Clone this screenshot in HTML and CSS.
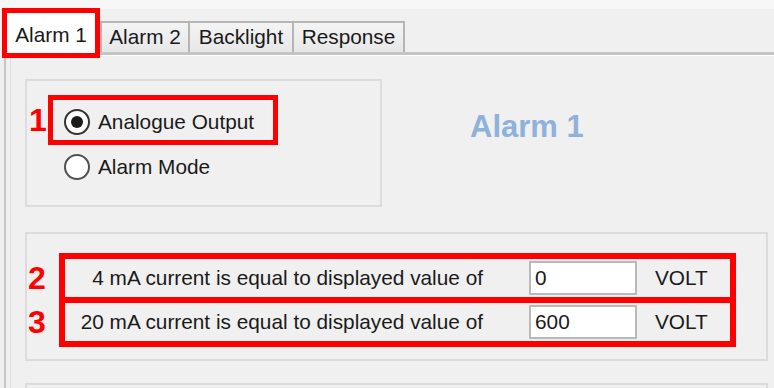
FILE: index.html
```html
<!DOCTYPE html>
<html lang="en">
<head>
  <meta charset="UTF-8" />
  <title>Alarm 1 settings</title>
  <link rel="stylesheet" href="styles.css">
</head>
<body>

  <div class="window">
    <div class="tabbar">
      <div class="tab tab-active">Alarm 1</div>
      <div class="tab tab-alarm2">Alarm 2</div>
      <div class="tab tab-backlight">Backlight</div>
      <div class="tab tab-response">Response</div>
    </div>

    <div class="tabpage">
      <div class="top-row">
        <div class="groupbox mode-box">
          <div class="radio-line">
            <span class="num num-1">1</span>
            <label class="radio-row mark-radio"><span class="radio checked"></span>Analogue Output</label>
          </div>
          <label class="radio-row radio-plain"><span class="radio"></span>Alarm Mode</label>
        </div>
        <div class="page-title">Alarm 1</div>
      </div>

      <div class="groupbox scale-box">
        <div class="scale-line">
          <span class="num">2</span>
          <div class="scale-row">
            <span class="scale-label">4 mA current is equal to displayed value of</span>
            <input class="value" type="text" value="0">
            <span class="unit">VOLT</span>
          </div>
        </div>
        <div class="scale-line scale-line-next">
          <span class="num">3</span>
          <div class="scale-row">
            <span class="scale-label">20 mA current is equal to displayed value of</span>
            <input class="value" type="text" value="600">
            <span class="unit">VOLT</span>
          </div>
        </div>
      </div>

      <div class="groupbox rest-box"></div>
    </div>
  </div>

</body>
</html>
```

FILE: styles.css
```css
body {
  margin: 0;
  background: #f0f0f0;
  font-family: "Liberation Sans", Arial, sans-serif;
  font-size: 20.8px;
  color: #1a1a1a;
  overflow: hidden;
}

.window {
  width: 774px;
  height: 388px;
  overflow: hidden;
}

/* tab strip */
.tabbar {
  display: flex;
  align-items: flex-end;
  height: 52px;
  padding-left: 2px;
  background: linear-gradient(#f7f7f7 0 9px, #f0f0f0 9px);
}

.tab {
  box-sizing: border-box;
  height: 31px;
  padding-top: 4px;
  border: 2px solid #b5b5b5;
  border-right: none;
  border-bottom: none;
  background: linear-gradient(#f4f4f4, #e7e7e7);
  font-size: 20.8px;
  line-height: 20px;
  text-align: center;
}

.tab-active {
  position: relative;
  z-index: 1;
  width: 98px;
  height: 50px;
  margin-bottom: -6px;
  padding-top: 12px;
  border: 5px solid #ff0000;
  background: #fff;
}

.tab-alarm2 { width: 88px; }
.tab-backlight { width: 104px; }
.tab-response {
  width: 113px;
  border-right: 2px solid #b5b5b5;
}

/* tab page */
.tabpage {
  margin-left: 4px;
  padding: 24px 0 0 19px;
  border-left: 2px solid #c6c6c6;
  border-top: 3px solid #c4c4c4;
  box-shadow: inset 0 1px 0 #fff, inset 4px 0 0 #f0f0f0, inset 5px 0 0 #e0e0e0;
  height: 400px;
}

.groupbox {
  box-sizing: border-box;
  border: 2px solid #dcdcdc;
}

.top-row {
  display: flex;
  align-items: flex-start;
}

.num {
  color: #ff0000;
  font-weight: bold;
  font-size: 32px;
  line-height: 1;
  flex: none;
}

/* output mode */
.mode-box {
  width: 357px;
  height: 128px;
  padding-top: 14px;
}

.radio-line {
  display: flex;
  align-items: center;
}

.num-1 {
  width: 21px;
  padding-left: 2px;
  box-sizing: border-box;
}

.radio-row {
  display: flex;
  align-items: center;
}

.mark-radio {
  box-sizing: border-box;
  width: 230px;
  height: 50px;
  padding: 4px 0 0 11px;
  border: 5px solid #ff0000;
}

.radio-plain {
  height: 26px;
  margin: 9px 0 0 37px;
}

.radio {
  box-sizing: border-box;
  width: 26px;
  height: 26px;
  margin-right: 8px;
  border: 2px solid #505050;
  border-radius: 50%;
  background: #fff;
  display: flex;
  align-items: center;
  justify-content: center;
  flex: none;
}

.radio.checked {
  border-color: #333;
}

.radio.checked::after {
  content: "";
  width: 12px;
  height: 12px;
  border-radius: 50%;
  background: #1a1a1a;
}

.page-title {
  margin: 32px 0 0 88px;
  font-weight: bold;
  font-size: 31px;
  line-height: 1;
  color: #8eb2d9;
}

/* current scaling */
.scale-box {
  width: 743px;
  height: 129px;
  margin-top: 25px;
  padding-top: 19px;
}

.scale-line {
  display: flex;
  align-items: center;
}

.scale-line .num {
  width: 32px;
  padding-left: 1px;
  box-sizing: border-box;
}

.scale-line-next {
  margin-top: -6px;
}

.scale-row {
  box-sizing: border-box;
  width: 677px;
  height: 50px;
  border: 6px solid #ff0000;
  display: flex;
  align-items: center;
}

.scale-label {
  width: 418px;
  text-align: right;
  white-space: nowrap;
}

.value {
  box-sizing: border-box;
  width: 108px;
  height: 34px;
  margin: 0 0 0 46px;
  padding: 0 4px;
  border: 2px solid #b9b9b9;
  background: #fff;
  font: inherit;
  color: #1a1a1a;
  outline: none;
}

.unit {
  margin-left: 18px;
}

.rest-box {
  width: 743px;
  height: 40px;
  margin-top: 22px;
}
```
